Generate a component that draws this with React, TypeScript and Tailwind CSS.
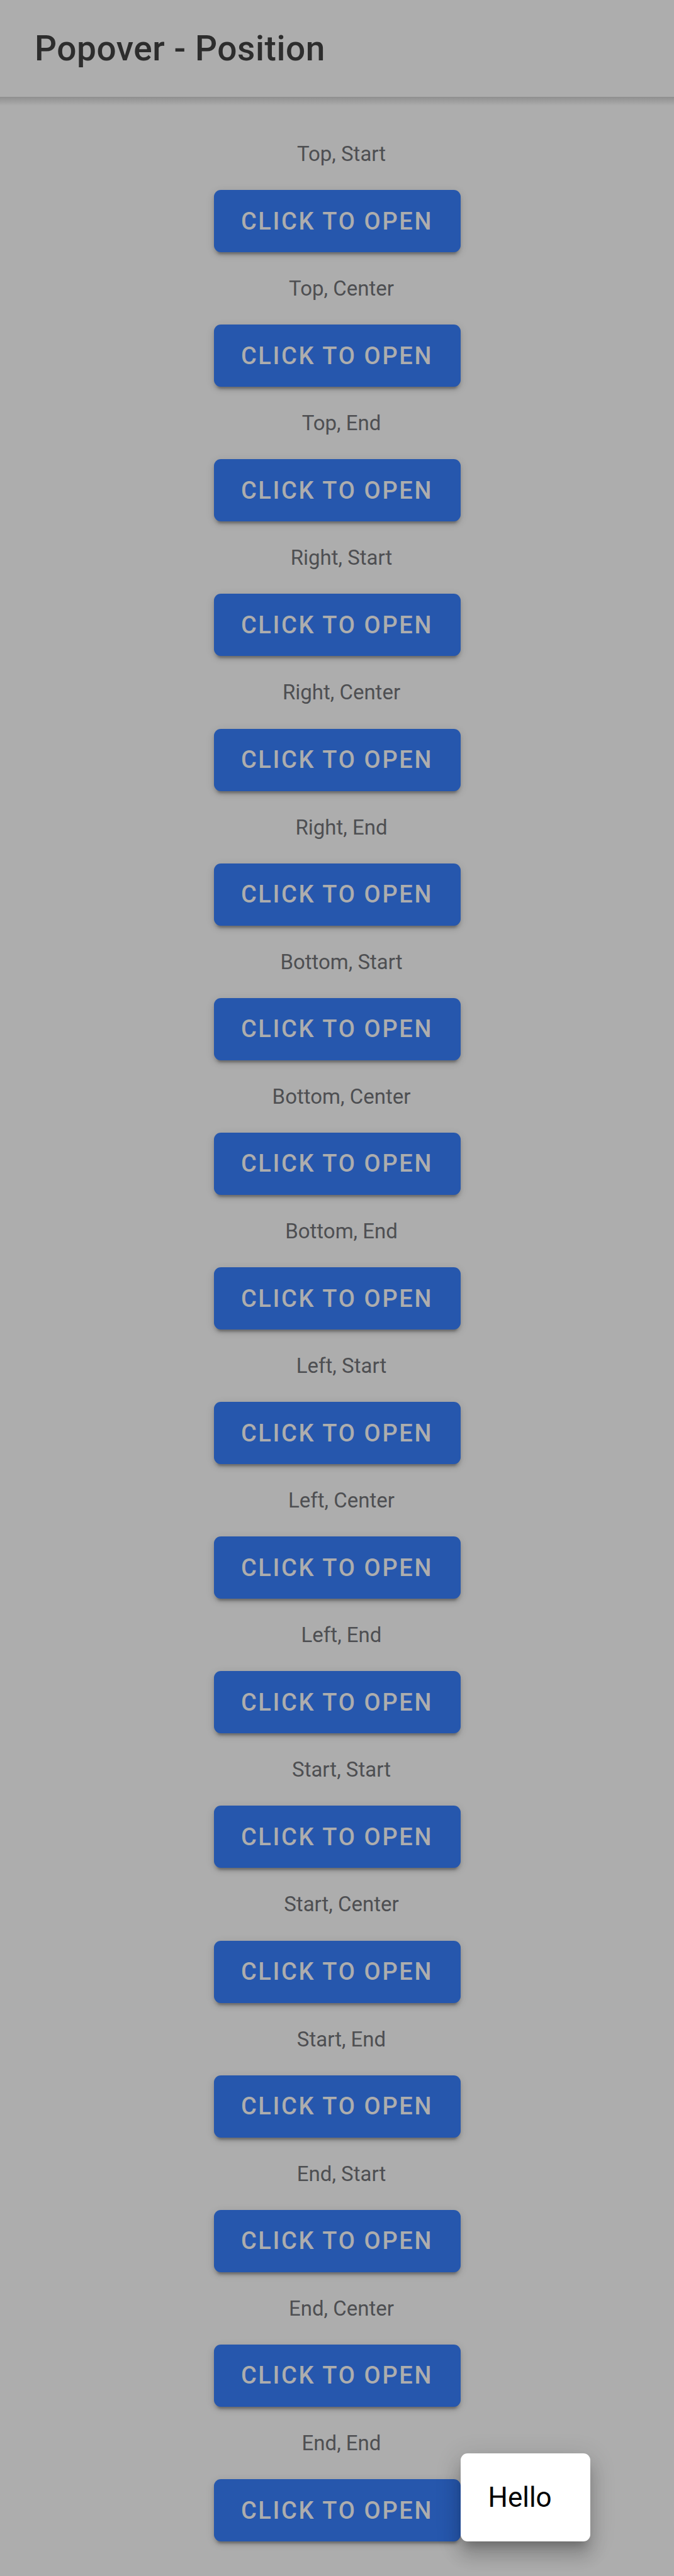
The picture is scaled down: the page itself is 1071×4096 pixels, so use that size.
const positions = [
  "Top, Start", "Top, Center", "Top, End",
  "Right, Start", "Right, Center", "Right, End",
  "Bottom, Start", "Bottom, Center", "Bottom, End",
  "Left, Start", "Left, Center", "Left, End",
  "Start, Start", "Start, Center", "Start, End",
  "End, Start", "End, Center", "End, End",
];

const openPosition = "End, End";

function Popover() {
  return (
    <div
      role="dialog"
      aria-label="Popover"
      className="absolute bottom-0 left-full z-10 flex h-[140px] w-[206px] items-center rounded-[11px] bg-white px-11 text-[44px] leading-none text-black shadow-[0_14px_14px_-8px_rgba(0,0,0,0.2),0_22px_27px_3px_rgba(0,0,0,0.14),0_8px_38px_5px_rgba(0,0,0,0.12)]"
    >
      Hello
    </div>
  );
}

function PositionItem({ label, id }: { label: string; id: string }) {
  const open = label === openPosition;
  return (
    <section className="flex flex-col items-center">
      <h2
        id={id}
        className="flex flex-1 items-center pl-[14px] text-[33px] leading-none font-normal text-[#4e4f52]"
      >
        {label}
      </h2>
      <div className="relative">
        <button
          type="button"
          aria-describedby={id}
          aria-expanded={open}
          className="block h-[99px] min-w-[392px] rounded-[11px] bg-[#2657ad] px-[30px] text-[38px] leading-none font-medium tracking-[0.07em] text-[#adadad] uppercase shadow-[0_8px_3px_-5px_rgba(0,0,0,0.2),0_5px_5px_0_rgba(0,0,0,0.14),0_3px_14px_0_rgba(0,0,0,0.12)]"
        >
          Click to open
        </button>
        {open && <Popover />}
      </div>
    </section>
  );
}

export default function App() {
  return (
    <div className="flex min-h-screen flex-col bg-[#adadad] font-[Roboto,sans-serif]">
      <header className="flex h-[154px] items-center px-[55px]">
        <h1 className="text-[55px] leading-none font-medium tracking-[0.01em] text-[#2d2d2d]">
          Popover - Position
        </h1>
      </header>
      <div className="h-[14px] bg-linear-to-b from-[#8f8f8f] to-[#adadad]" />
      <main className="grid flex-1 auto-rows-fr pt-[19px] pb-[55px]">
        {positions.map((label, index) => (
          <PositionItem key={label} label={label} id={`position-${index}`} />
        ))}
      </main>
    </div>
  );
}
